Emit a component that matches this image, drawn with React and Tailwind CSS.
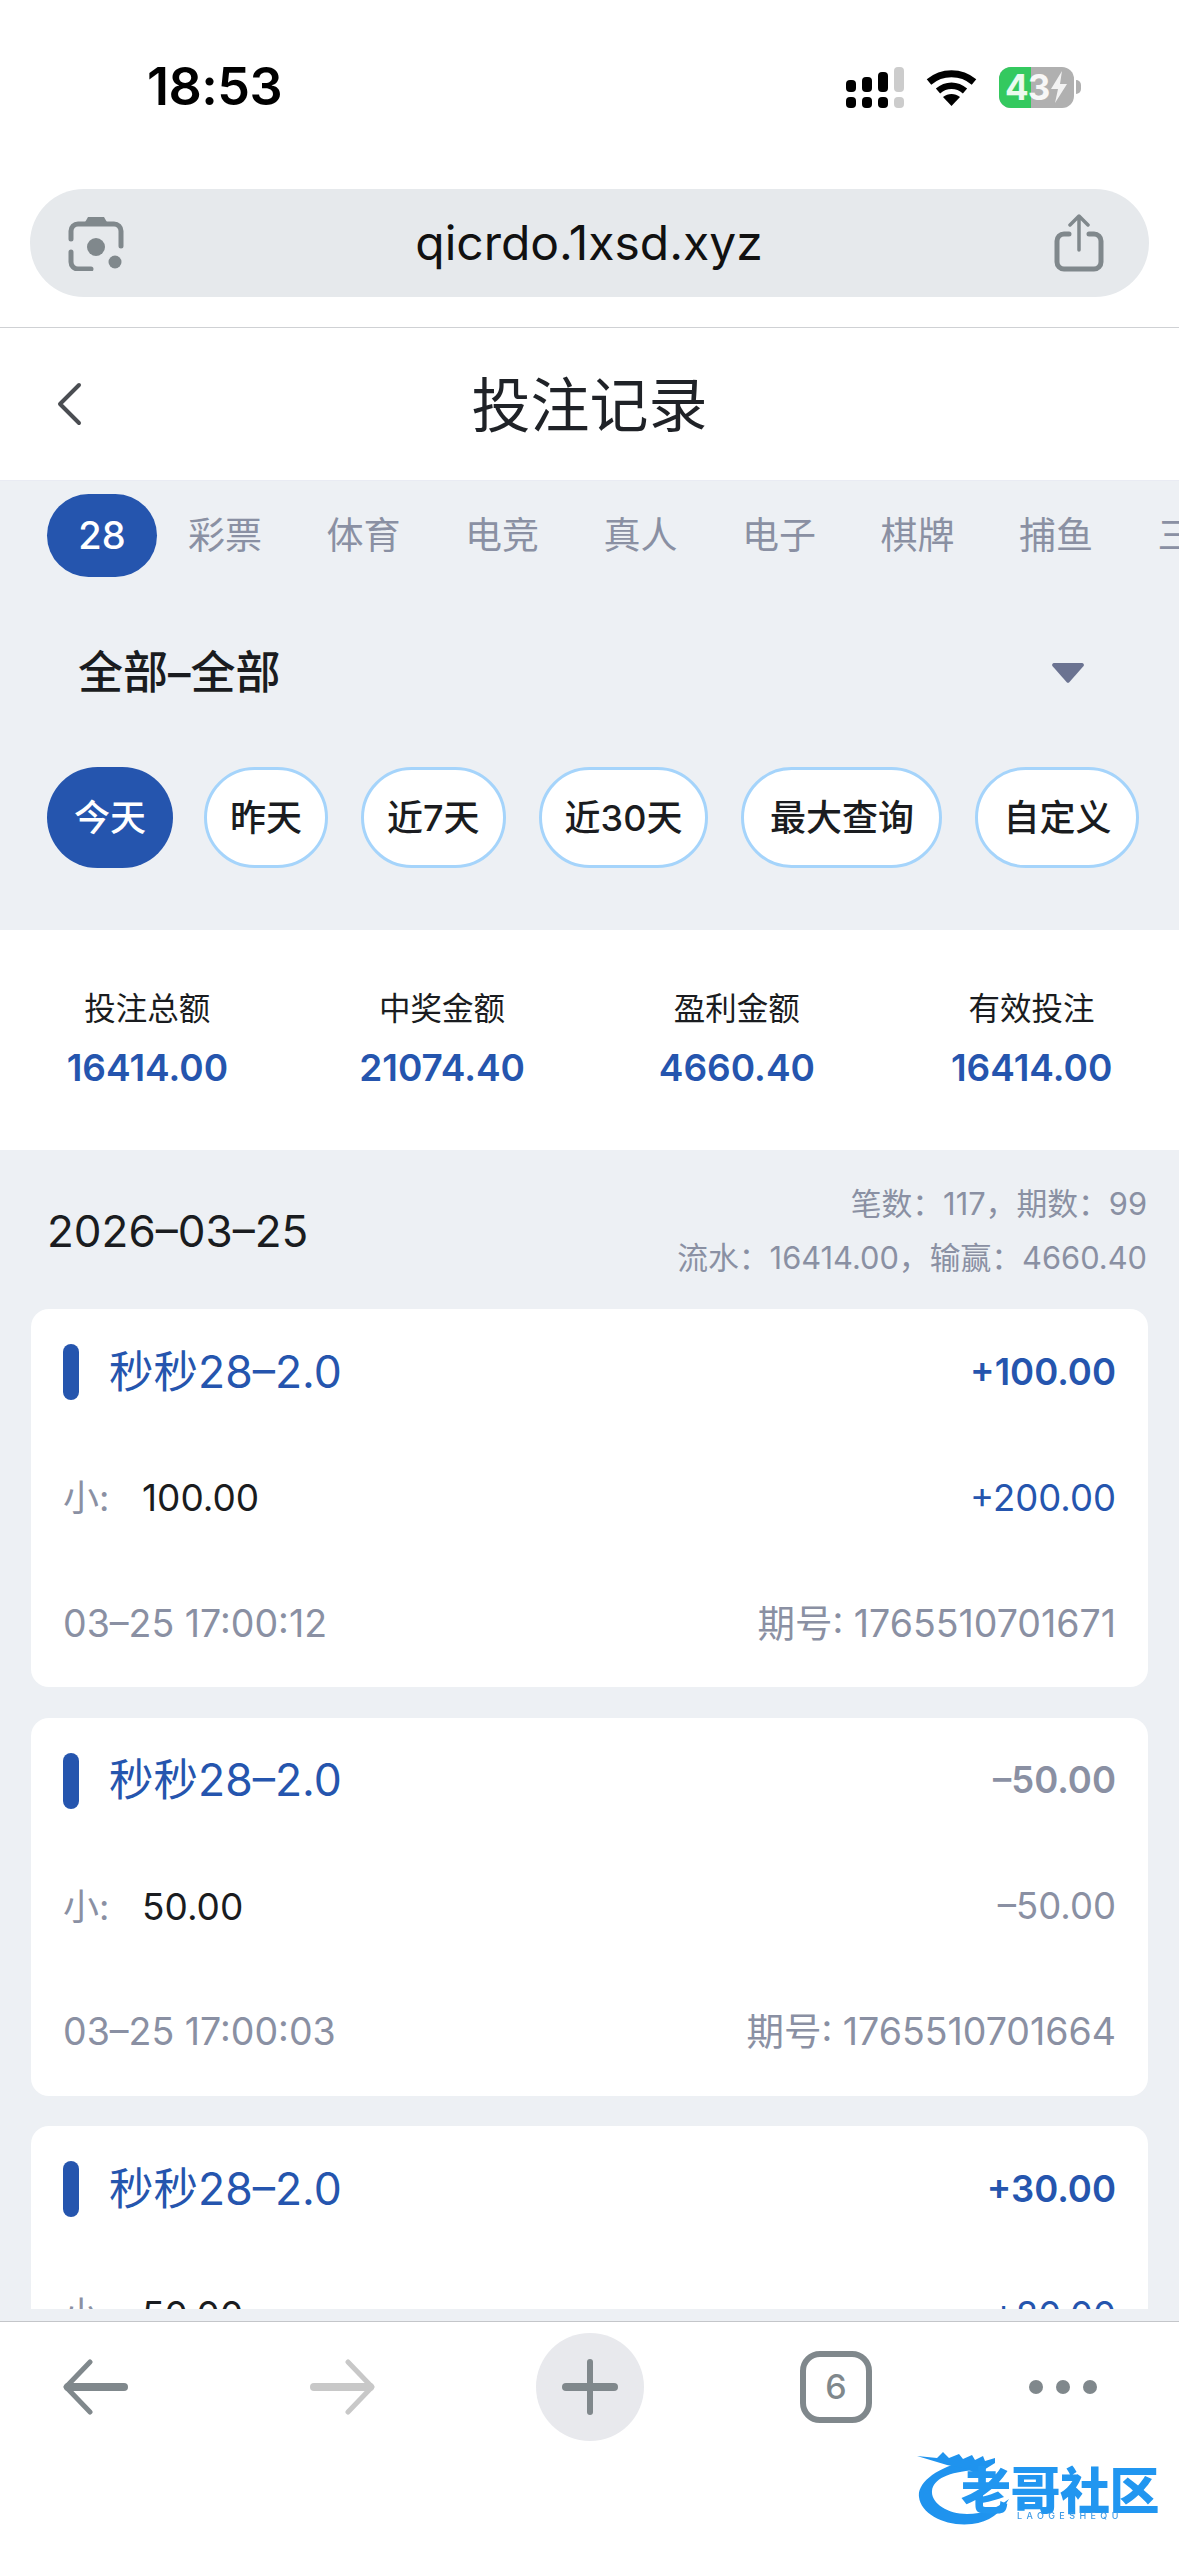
import React from 'react';

const tabs = ['彩票', '体育', '电竞', '真人', '电子', '棋牌', '捕鱼', '三方'];
const ranges = [
  { label: '昨天', pad: 'px-[23px]' },
  { label: '近7天', pad: 'px-[23px]' },
  { label: '近30天', pad: 'px-[23px]' },
  { label: '最大查询', pad: 'px-[25.5px]' },
  { label: '自定义', pad: 'px-[25px]' },
];
const stats = [
  ['投注总额', '16414.00'],
  ['中奖金额', '21074.40'],
  ['盈利金额', '4660.40'],
  ['有效投注', '16414.00'],
];
const records = [
  { profit: '+100.00', bet: '100.00', payout: '+200.00', time: '03–25 17:00:12', issue: '1765510701671', win: true },
  { profit: '–50.00', bet: '50.00', payout: '–50.00', time: '03–25 17:00:03', issue: '1765510701664', win: false },
  { profit: '+30.00', bet: '50.00', payout: '+80.00', time: '03–25 16:59:54', issue: '1765510701657', win: true },
];

const StatusIcons = () => (
  <div className="flex items-center">
    {/* signal */}
    <svg width="58" height="41" viewBox="0 0 58 41" fill="#000">
      <rect x="0" y="13" width="10" height="12" rx="4" />
      <rect x="16" y="10" width="10" height="15" rx="4" />
      <rect x="32" y="5" width="10" height="20" rx="4" />
      <rect x="48" y="0" width="10" height="25" rx="4" fill="#cccccc" />
      <rect x="0" y="30" width="10" height="11" rx="4" />
      <rect x="16" y="30" width="10" height="11" rx="4" />
      <rect x="32" y="30" width="10" height="11" rx="4" />
      <rect x="48" y="30" width="10" height="11" rx="4" fill="#cccccc" />
    </svg>
    {/* wifi */}
    <svg className="ml-[22px]" width="51" height="38" viewBox="0 0 51 38" fill="none">
      <path d="M3 14 C16 3 35 3 48 14" stroke="#000" strokeWidth="7" strokeLinejoin="round" />
      <path d="M12 23 C20 16 31 16 39 23" stroke="#000" strokeWidth="6.5" />
      <path d="M17 29 C22 25 29 25 34 29 L25.5 38 Z" fill="#000" />
    </svg>
    {/* battery */}
    <div className="ml-[22px] relative w-[75px] h-[41px] rounded-[12px] overflow-hidden bg-[#b0b0b0] flex items-center">
      <div className="absolute left-0 top-0 bottom-0 w-[32px] bg-[#34c95f]" />
      <span className="relative pl-[6px] text-[35px] leading-none font-bold text-white/90 tracking-[-1px]">43</span>
      <svg className="relative ml-[1px]" width="18" height="32" viewBox="0 0 18 32" fill="#f2f2f2">
        <path d="M12 0 L1 18 H8 L5 32 L17 13 H10 Z" />
      </svg>
    </div>
    <div className="ml-[2px] w-[5px] h-[14px] rounded-r-full bg-[#b0b0b0]" />
  </div>
);

const Toolbar = () => (
  <div className="h-[235px] shrink-0 bg-white border-t border-[#c4c6ca] pt-[11px] pl-[62px]">
    <div className="flex items-center h-[108px]">
      <svg width="66" height="56" viewBox="0 0 66 56" fill="none" strokeLinecap="round" strokeLinejoin="round">
        <path d="M6 28 H62" stroke="#80888c" strokeWidth="8" />
        <path d="M28 3 L4 28 L28 53" stroke="#80888c" strokeWidth="5" />
      </svg>
      <svg className="ml-[182px]" width="66" height="56" viewBox="0 0 66 56" fill="none" strokeLinecap="round" strokeLinejoin="round">
        <path d="M4 28 H60" stroke="#c8c8c8" strokeWidth="8" />
        <path d="M38 3 L62 28 L38 53" stroke="#c8c8c8" strokeWidth="5" />
      </svg>
      <div className="ml-[160px] w-[108px] h-[108px] rounded-full bg-[#e8e9ed] flex items-center justify-center">
        <svg width="56" height="56" viewBox="0 0 56 56" fill="none" strokeLinecap="round">
          <path d="M4 28 H52" stroke="#80888c" strokeWidth="8" />
          <path d="M28 3 V53" stroke="#80888c" strokeWidth="6" />
        </svg>
      </div>
      <div className="ml-[156px] w-[72px] h-[72px] rounded-[20px] border-[6px] border-[#80888c] flex items-center justify-center text-[34px] font-medium text-[#80888c] leading-none">
        6
      </div>
      <div className="ml-[157px] flex gap-[13px]">
        <div className="w-[14px] h-[14px] rounded-full bg-[#80888c]" />
        <div className="w-[14px] h-[14px] rounded-full bg-[#80888c]" />
        <div className="w-[14px] h-[14px] rounded-full bg-[#80888c]" />
      </div>
    </div>
  </div>
);

const Watermark = () => (
  <div className="absolute left-[917px] top-[2445px] w-[245px] h-[82px] blur-[0.7px]">
    <svg className="absolute left-0 top-0" width="100" height="82" viewBox="0 0 100 82" fill="#1f93ee">
      <path d="M50 16 C20 22 0 38 2 52 C4 70 30 82 55 79 C72 77 84 68 92 54 C80 63 66 69 50 69 C30 69 14 58 15 46 C16 34 32 27 58 25 Z" />
      <path d="M0 11 L20 13 L26 7 L32 13 L42 9 L46 14 L55 10 L58 15 L66 11 L68 16 L78 13 L78 18 L70 23 L60 29 L50 24 L30 20 Z" />
    </svg>
    <div className="absolute left-[44px] top-[28px] text-[50px] leading-[37px] font-black tracking-[-0.5px] text-[#2196f0] whitespace-nowrap">
      老哥社区
    </div>
    <div className="absolute left-[100px] top-[66px] text-[9px] leading-[10px] tracking-[4.4px] font-medium text-[#3f9be6] whitespace-nowrap">
      LAOGESHEQU
    </div>
  </div>
);

const RecordCard = ({ r }) => {
  const color = r.win ? 'text-[#2555ae]' : 'text-[#8a90a3]';
  return (
    <div className="bg-white rounded-[18px] px-[32px] shrink-0">
      <div className="h-[126px] flex items-center justify-between">
        <div className="flex items-center">
          <div className="w-[16px] h-[56px] rounded-[8px] bg-[#2555ae]" />
          <span className="ml-[30px] text-[44.5px] text-[#2555ae]">秒秒28–2.0</span>
        </div>
        <span className={`text-[36.5px] font-semibold ${color}`}>{r.profit}</span>
      </div>
      <div className="h-[126px] flex items-center justify-between">
        <div className="flex items-center">
          <span className="w-[79px] text-[36px] text-[#8a90a3]">小:</span>
          <span className="text-[37px] text-[#1a1c20]">{r.bet}</span>
        </div>
        <span className={`text-[36.5px] ${color}`}>{r.payout}</span>
      </div>
      <div className="h-[126px] flex items-center justify-between text-[37.5px] text-[#8a90a3]">
        <span>{r.time}</span>
        <span>期号: {r.issue}</span>
      </div>
    </div>
  );
};

export default function App() {
  return (
    <div className="relative h-[2556px] w-[1179px] overflow-hidden flex flex-col bg-white font-[Inter,'Noto_Sans_CJK_SC',sans-serif]">
      {/* STATUS BAR */}
      <div className="h-[174px] mb-[15px] shrink-0 flex items-center justify-between pl-[147px] pr-[98px]">
        <span className="text-[52px] font-semibold text-black leading-none tracking-[-0.5px]">18:53</span>
        <StatusIcons />
      </div>

      {/* URL BAR */}
      <div className="mx-[30px] h-[108px] shrink-0 rounded-[54px] bg-[#e6e9ec] flex items-center justify-between pl-[38px] pr-[45px]">
        <svg width="56" height="56" viewBox="0 0 56 56" fill="none">
          <path d="M3 24 V16 a7 7 0 0 1 7 -7 h36 a7 7 0 0 1 7 7 v15" stroke="#80888c" strokeWidth="5" strokeLinecap="round" />
          <path d="M3 37 V47 a7 7 0 0 0 7 7 h13" stroke="#80888c" strokeWidth="5" strokeLinecap="round" />
          <path d="M16 9 L20 2 h16 L40 9 Z" fill="#80888c" />
          <circle cx="28" cy="32" r="9" fill="#80888c" />
          <circle cx="47" cy="47" r="6.5" fill="#80888c" />
        </svg>
        <span className="text-[48px] text-[#111]">qicrdo.1xsd.xyz</span>
        <svg width="50" height="58" viewBox="0 0 50 58" fill="none" stroke="#80888c" strokeLinecap="round" strokeLinejoin="round">
          <path d="M15 20 H10 a7 7 0 0 0 -7 7 V48 a7 7 0 0 0 7 7 H40 a7 7 0 0 0 7 -7 V27 a7 7 0 0 0 -7 -7 H35" strokeWidth="5" />
          <path d="M25 36 V3 M16 11 L25 2 L34 11" strokeWidth="3.5" />
        </svg>
      </div>
      <div className="h-[30px] shrink-0 border-b border-[#cfd1d4] box-content" />

      {/* HEADER */}
      <div className="h-[153px] shrink-0 relative flex items-center justify-center border-b border-[#e9ebf3]">
        <svg className="absolute left-[56px] top-[54px]" width="26" height="44" viewBox="0 0 26 44" fill="none">
          <path d="M23 3 L4 22 L23 41" stroke="#4a4d52" strokeWidth="4" strokeLinecap="round" strokeLinejoin="round" />
        </svg>
        <h1 className="text-[59px] text-[#1f2227] font-normal translate-y-[2px]">投注记录</h1>
      </div>

      <div className="flex-1 min-h-0 flex flex-col bg-[#edf0f4]">
        <div className="flex-1 min-h-0 overflow-hidden mb-[12px]">
          {/* FILTERS */}
          <div className="pt-[13px] pb-[62px]">
            <div className="flex items-center pl-[47px] overflow-hidden">
              <div className="w-[110px] h-[83px] shrink-0 mr-[31px] rounded-full bg-[#2555ae] flex items-center justify-center text-[38px] font-medium text-white">
                28
              </div>
              <div className="flex gap-[64.5px]">
                {tabs.map((t) => (
                  <span key={t} className="shrink-0 text-[37px] text-[#8a90a3]">{t}</span>
                ))}
              </div>
            </div>

            <div className="h-[100px] mt-[46px] pl-[78px] pr-[95px] flex items-center justify-between">
              <span className="text-[45px] font-medium text-[#1a1c20]">全部–全部</span>
              <svg width="32" height="20" viewBox="0 0 32 20" fill="#6b7391">
                <path d="M2 0 H30 a2 2 0 0 1 1.6 3 L17.5 19 a2 2 0 0 1 -3 0 L0.4 3 A2 2 0 0 1 2 0 Z" />
              </svg>
            </div>

            <div className="mt-[44px] pl-[47px] flex gap-[33px]">
              <div className="h-[101px] px-[27px] -mr-[2px] rounded-full bg-[#2555ae] flex items-center text-[36px] font-medium text-white">
                今天
              </div>
              {ranges.map((r) => (
                <div key={r.label} className={`h-[101px] ${r.pad} rounded-full bg-white border-[3px] border-[#a5d4fb] flex items-center text-[36px] font-medium text-[#1a1c20] whitespace-nowrap`}>
                  {r.label}
                </div>
              ))}
            </div>
          </div>

          {/* TOTALS */}
          <div className="h-[220px] bg-white grid grid-cols-4">
            {stats.map(([label, value]) => (
              <div key={label} className="flex flex-col items-center pt-[59px]">
                <span className="text-[31.5px] leading-[40px] text-[#1a1c20]">{label}</span>
                <span className="mt-[15px] text-[37px] leading-[48px] font-semibold text-[#2555ae]">{value}</span>
              </div>
            ))}
          </div>

          {/* DAY SUMMARY */}
          <div className="pt-[27px] pb-[24px] pl-[47px] pr-[32px] flex items-center justify-between">
            <span className="text-[44px] text-[#1a1c20]">2026–03–25</span>
            <div className="flex flex-col items-end text-[30.8px] leading-[54px] text-[#8a90a3]">
              <span>笔数：117，期数：99</span>
              <span>流水：16414.00，输赢：4660.40</span>
            </div>
          </div>

          {/* RECORDS */}
          <div className="mx-[31px] flex flex-col gap-[30.5px]">
            {records.map((r) => (
              <RecordCard key={r.issue} r={r} />
            ))}
          </div>
        </div>
      </div>

      <Toolbar />
      <Watermark />
    </div>
  );
}
